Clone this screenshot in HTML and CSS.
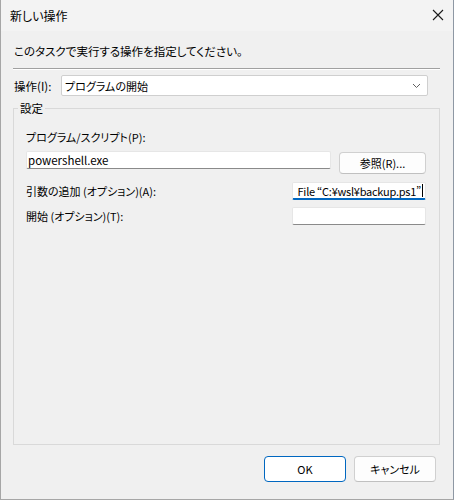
FILE: index.html
```html
<!DOCTYPE html>
<html lang="ja">
<head>
<meta charset="utf-8">
<title>新しい操作</title>
<link rel="stylesheet" href="styles.css">
</head>
<body>
<div class="window">
  <div class="titlebar">
    <span class="title">新しい操作</span>
    <svg class="close" width="12" height="12" viewBox="0 0 12 12"><path d="M1 1 L11 11 M11 1 L1 11" stroke="#1a1a1a" stroke-width="1.1" fill="none"/></svg>
  </div>
  <div class="content">
    <p class="intro">このタスクで実行する操作を指定してください。</p>
    <div class="separator"></div>
    <div class="action-row">
      <span class="label">操作(I):</span>
      <div class="select">
        <span>プログラムの開始</span>
        <svg width="9" height="6" viewBox="0 0 9 6"><path d="M1 1 L4.5 4.5 L8 1" stroke="#606060" stroke-width="1" fill="none"/></svg>
      </div>
    </div>
    <fieldset class="group">
      <legend>設定</legend>
      <div class="label">プログラム/スクリプト(P):</div>
      <div class="program-row">
        <div class="input input-program">powershell.exe</div>
        <div class="btn btn-browse">参照(R)...</div>
      </div>
      <div class="field-row row-args">
        <span class="label">引数の追加 (オプション)(A):</span>
        <div class="input input-small focused"><span class="scroll">File “C:¥wsl¥backup.ps1”</span><span class="caret"></span></div>
      </div>
      <div class="field-row row-start">
        <span class="label">開始 (オプション)(T):</span>
        <div class="input input-small"></div>
      </div>
    </fieldset>
    <div class="buttons">
      <div class="btn btn-dialog btn-default">OK</div>
      <div class="btn btn-dialog">キャンセル</div>
    </div>
  </div>
</div>
</body>
</html>
```
FILE: styles.css
```css
* { box-sizing: border-box; }
html, body { margin: 0; padding: 0; }
body {
  font-family: "Noto Sans CJK JP", "Noto Sans", sans-serif;
  font-size: 11px;
  line-height: 16px;
  color: #000;
  font-feature-settings: "palt";
  background: #f0f0f0;
}
.window {
  width: 454px;
  height: 500px;
  border-left: 1px solid #a6a6a6;
  border-right: 1px solid #8e98a4;
  border-bottom: 1px solid #a6a6a6;
  background: #f0f0f0;
  display: flex;
  flex-direction: column;
}
.titlebar {
  height: 31px;
  flex: none;
  background: #f3f3f3;
  display: flex;
  align-items: center;
  justify-content: space-between;
  padding: 0 9px 0 9px;
}
.title { font-size: 12px; }
.close { margin-top: -1px; }
.content {
  flex: 1;
  display: flex;
  flex-direction: column;
  padding: 0 13px 17px 12px;
}
.intro {
  margin: 12px 0 0 1px;
  font-size: 11.5px;
}
.separator {
  margin-top: 9px;
  height: 2px;
  border-top: 1px solid #a0a0a0;
  border-bottom: 1px solid #ffffff;
}
.action-row {
  margin-top: 5px;
  display: flex;
  align-items: center;
  padding-left: 1px;
  padding-right: 12px;
}
.action-row .label { width: 47px; flex: none; font-size: 11.5px; }
.select {
  flex: 1;
  height: 21px;
  background: #fff;
  border: 1px solid #cfcfcf;
  border-radius: 2px;
  display: flex;
  align-items: center;
  justify-content: space-between;
  padding: 0 6px 0 3px;
}
.group {
  flex: 1;
  margin: 4px 0 0 0;
  padding: 13px 13px 0 12px;
  border: 1px solid #d9d9d9;
  min-width: 0;
}
.group legend {
  padding: 0 2px;
  margin-left: -8px;
  line-height: 16px;
  font-size: 11.5px;
}
.program-row {
  margin-top: 6px;
  display: flex;
  align-items: flex-start;
  justify-content: space-between;
}
.input {
  background: #fff;
  height: 18px;
  border: 1px solid #e6e6e6;
  border-bottom-color: #8a8a8a;
  border-radius: 2px;
  padding: 0 2px;
  line-height: 16px;
  white-space: nowrap;
  overflow: hidden;
}
.input-program { width: 305px; padding-left: 1px; font-size: 11.5px; }
.btn {
  display: flex;
  align-items: center;
  justify-content: center;
  background: #fdfdfd;
  border: 1px solid #d0d0d0;
  border-bottom-color: #c0c0c0;
  border-radius: 4px;
}
.btn-browse {
  width: 87px;
  height: 22px;
  margin-top: 1px;
}
.field-row {
  display: flex;
  align-items: center;
  justify-content: space-between;
}
.row-args { margin-top: 8px; }
.row-start { margin-top: 7px; }
.input-small { width: 134px; }
.focused {
  border-bottom: 2px solid #0067c0;
  display: flex;
  justify-content: flex-end;
  align-items: center;
  padding: 0 2px 0 0;
}
.scroll { flex: none; font-size: 11px; letter-spacing: -0.25px; }
.caret {
  flex: none;
  width: 1px;
  height: 13px;
  background: #000;
  margin-left: 1px;
}
.buttons {
  margin-top: 11px;
  display: flex;
  justify-content: flex-end;
  gap: 8px;
  padding-right: 4px;
}
.btn-dialog {
  width: 82px;
  height: 26px;
}
.btn-default {
  border: 1px solid #0067c0;
  background: #ffffff;
}
```
